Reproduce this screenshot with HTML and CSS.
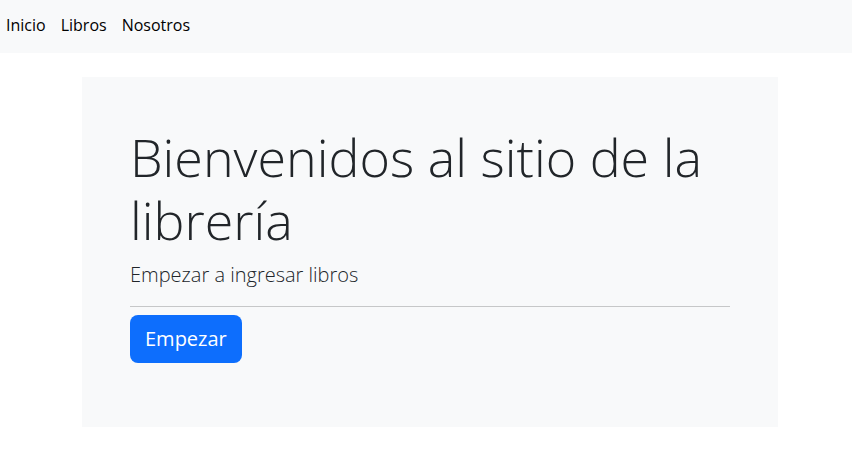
FILE: index.html
```html
<!DOCTYPE html>
<html lang="es">
<head>
<meta charset="utf-8">
<title>Librería</title>
<link rel="stylesheet" href="styles.css">
</head>
<body>
<nav class="navbar">
  <ul class="nav-list">
    <li><a class="nav-link" href="#">Inicio</a></li>
    <li><a class="nav-link" href="#">Libros</a></li>
    <li><a class="nav-link" href="#">Nosotros</a></li>
  </ul>
</nav>
<main class="container">
  <section class="jumbotron">
    <h1 class="display">Bienvenidos al sitio de la librería</h1>
    <p class="lead">Empezar a ingresar libros</p>
    <hr class="divider">
    <p class="lead action"><a class="btn" href="#">Empezar</a></p>
  </section>
</main>
</body>
</html>
```
FILE: styles.css
```css
* { box-sizing: border-box; }
html, body {
  margin: 0;
  background: #fff;
  color: #212529;
  font-family: "Open Sans", "Noto Sans", sans-serif;
  font-size: 16px;
  line-height: 1.5;
}
.navbar {
  background: #f8f9fa;
  height: 53px;
  padding-bottom: 3px;
  display: flex;
  align-items: center;
}
.nav-list {
  list-style: none;
  margin: 0;
  padding: 0 0 0 6px;
  display: flex;
  gap: 15px;
}
.nav-link {
  color: #000;
  text-decoration: none;
  font-size: 16px;
  line-height: 24px;
}
.container {
  width: 696px;
  margin: 24px 0 0 82px;
}
.jumbotron {
  background: #f8f9fa;
  padding: 48px;
}
.display {
  margin: 0 0 9px;
  font-size: 52px;
  font-weight: 330;
  line-height: 63px;
}
.lead {
  margin: 0 0 16px;
  font-size: 20px;
  font-weight: 300;
  line-height: 30px;
}
.divider {
  margin: 0 0 8px;
  border: 0;
  border-top: 1px solid #c6c7c8;
}
.action { margin: 0 0 16px; line-height: 0; }
.btn {
  display: inline-block;
  background: #0d6efd;
  color: #fff;
  text-decoration: none;
  font-size: 20px;
  font-weight: 400;
  line-height: 30px;
  padding: 9px 15px;
  border-radius: 8px;
}
```
